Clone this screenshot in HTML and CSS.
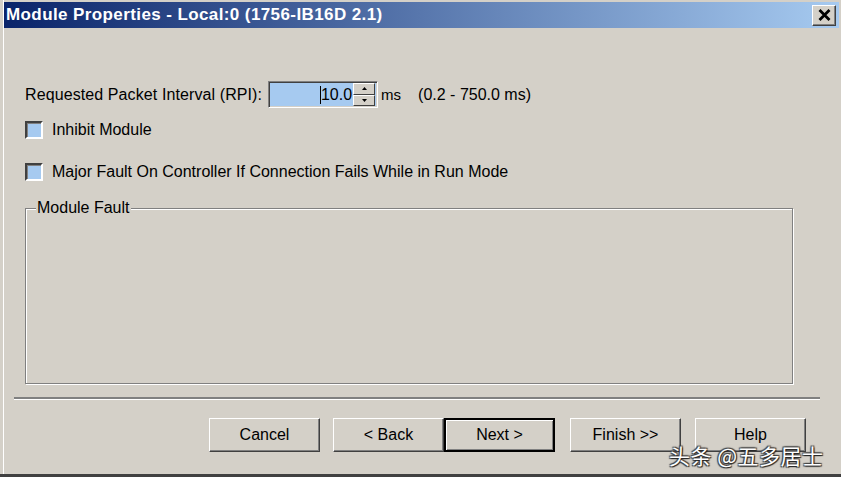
FILE: index.html
```html
<!DOCTYPE html>
<html lang="en">
<head>
    <meta charset="UTF-8">
    <title>Module Properties</title>
    <link rel="stylesheet" href="styles.css">
</head>
<body>

    <div class="window">
        <!-- Title bar -->
        <div class="titlebar">
            <span class="title">Module Properties - Local:0 (1756-IB16D 2.1)</span>
            <button class="close" aria-label="Close">
                <svg width="13" height="12" viewBox="0 0 13 12">
                    <path d="M1.5 1 L11.5 11 M11.5 1 L1.5 11" stroke="#000" stroke-width="2.8" fill="none"/>
                </svg>
            </button>
        </div>

        <div class="content">
            <div class="fields">
                <div class="rpi-row">
                    <span class="rpi-label">Requested Packet Interval (RPI):</span>
                    <div class="spinbox">
                        <span class="spin-value"><span class="caret"></span>10.0</span>
                        <div class="spin-buttons">
                            <span class="spin-btn">
                                <svg width="5" height="3" viewBox="0 0 5 3"><path d="M2.5 0 L5 3 L0 3 Z" fill="#000"/></svg>
                            </span>
                            <span class="spin-btn">
                                <svg width="5" height="3" viewBox="0 0 5 3"><path d="M0 0 L5 0 L2.5 3 Z" fill="#000"/></svg>
                            </span>
                        </div>
                    </div>
                    <span class="unit">ms</span>
                    <span class="range">(0.2 - 750.0 ms)</span>
                </div>

                <label class="check check-first"><span class="box"></span>Inhibit Module</label>
                <label class="check check-second"><span class="box"></span>Major Fault On Controller If Connection Fails While in Run Mode</label>

                <div class="group">
                    <span class="group-title">Module Fault</span>
                </div>
            </div>

            <div class="separator"></div>

            <div class="buttons">
                <button class="btn btn-cancel">Cancel</button>
                <button class="btn btn-back">&lt; Back</button>
                <button class="btn btn-next">Next &gt;</button>
                <button class="btn btn-finish">Finish &gt;&gt;</button>
                <button class="btn btn-help">Help</button>
            </div>
        </div>

        <div class="watermark">头条 @五多居士</div>
    </div>

</body>
</html>
```

FILE: styles.css
```css
/* Global Styles */
body {
    margin: 0;
    padding: 0;
    background: #d4d0c8;
    font-family: "Liberation Sans", Arial, sans-serif;
    font-size: 16px;
    color: #000;
}

.window {
    position: relative;
    width: 841px;
    height: 477px;
    box-sizing: border-box;
    padding: 2px 2px 0 4px;
    border-bottom: 3px solid #404040;
    box-shadow: inset 3px 0 0 #d4d0c8, inset 4px 0 0 #ffffff;
    overflow: hidden;
}

/* Title bar */
.titlebar {
    height: 26px;
    display: flex;
    align-items: center;
    justify-content: space-between;
    background: linear-gradient(to right, #0a246a, #a6caf0);
}

.title {
    color: #fff;
    font-weight: bold;
    font-size: 17px;
    padding-left: 2px;
    letter-spacing: 0.4px;
}

.close {
    width: 24px;
    height: 21px;
    margin-right: 3px;
    padding: 0;
    display: flex;
    align-items: center;
    justify-content: center;
    background: #d4d0c8;
    border: 1px solid;
    border-color: #fff #404040 #404040 #fff;
    box-shadow: inset -1px -1px 0 #808080;
}

/* Form fields */
.content {
    padding-left: 10px;
}

.fields {
    padding-left: 11px;
}

.rpi-row {
    margin-top: 53px;
    height: 27px;
    display: flex;
    align-items: center;
}

.rpi-label {
    letter-spacing: 0.1px;
}

.spinbox {
    width: 110px;
    height: 27px;
    box-sizing: border-box;
    margin-left: 6px;
    display: flex;
    align-items: center;
    background: #a6caf0;
    border: 1px solid;
    border-color: #808080 #fff #fff #808080;
    box-shadow: inset 1px 1px 0 #404040, inset -1px -1px 0 #d4d0c8;
}

.spin-value {
    flex: 1;
    display: flex;
    align-items: center;
    justify-content: flex-end;
    padding-right: 1px;
}

.caret {
    width: 1px;
    height: 18px;
    background: #000;
}

.spin-buttons {
    width: 22px;
    height: 23px;
    margin-right: 2px;
    display: flex;
    flex-direction: column;
}

.spin-btn {
    flex: 1;
    display: flex;
    align-items: center;
    justify-content: center;
    background: #d4d0c8;
    border: 1px solid;
    border-color: #fff #404040 #404040 #fff;
}

.unit {
    margin-left: 3px;
    font-size: 15px;
}

.range {
    margin-left: 17px;
}

.check {
    display: flex;
    align-items: center;
    height: 18px;
}

.check-first {
    margin-top: 13px;
}

.check-second {
    margin-top: 24px;
}

.box {
    width: 18px;
    height: 18px;
    box-sizing: border-box;
    margin-right: 9px;
    background: #a6caf0;
    border: 2px solid;
    border-color: #404040 #fff #fff #404040;
    box-shadow: inset 1px 1px 0 #808080;
}

/* Module Fault group box */
.group {
    margin-top: 27px;
    width: 768px;
    height: 176px;
    box-sizing: border-box;
    border: 1px solid #808080;
    box-shadow: 1px 1px 0 #fff, inset 1px 1px 0 #fff;
}

.group-title {
    display: inline-block;
    margin: -10px 0 0 10px;
    padding: 0 1px;
    line-height: 18px;
    background: #d4d0c8;
    vertical-align: top;
}

.separator {
    margin-top: 13px;
    width: 806px;
    height: 2px;
    background: #808080;
    border-bottom: 1px solid #fff;
}

/* Buttons */
.buttons {
    margin-top: 18px;
    padding-left: 195px;
    display: flex;
}

.btn {
    width: 111px;
    height: 34px;
    box-sizing: border-box;
    padding: 0;
    font-family: "Liberation Sans", Arial, sans-serif;
    font-size: 16px;
    color: #000;
    background: #d4d0c8;
    border: 1px solid;
    border-color: #fff #404040 #404040 #fff;
    box-shadow: inset -1px -1px 0 #808080;
}

.btn-back {
    margin-left: 13px;
}

.btn-next {
    border: 2px solid #000;
    box-shadow: inset 1px 1px 0 #fff, inset -1px -1px 0 #808080;
}

.btn-finish {
    margin-left: 15px;
}

.btn-help {
    margin-left: 14px;
}

.watermark {
    position: absolute;
    left: 669px;
    top: 440px;
    color: #fff;
    font-family: "Noto Sans CJK SC", sans-serif;
    font-size: 21px;
    letter-spacing: 0.5px;
    text-shadow: 1px 1px 1px #222, -1px -1px 1px #444, 1px -1px 1px #444, -1px 1px 1px #444;
}
```
